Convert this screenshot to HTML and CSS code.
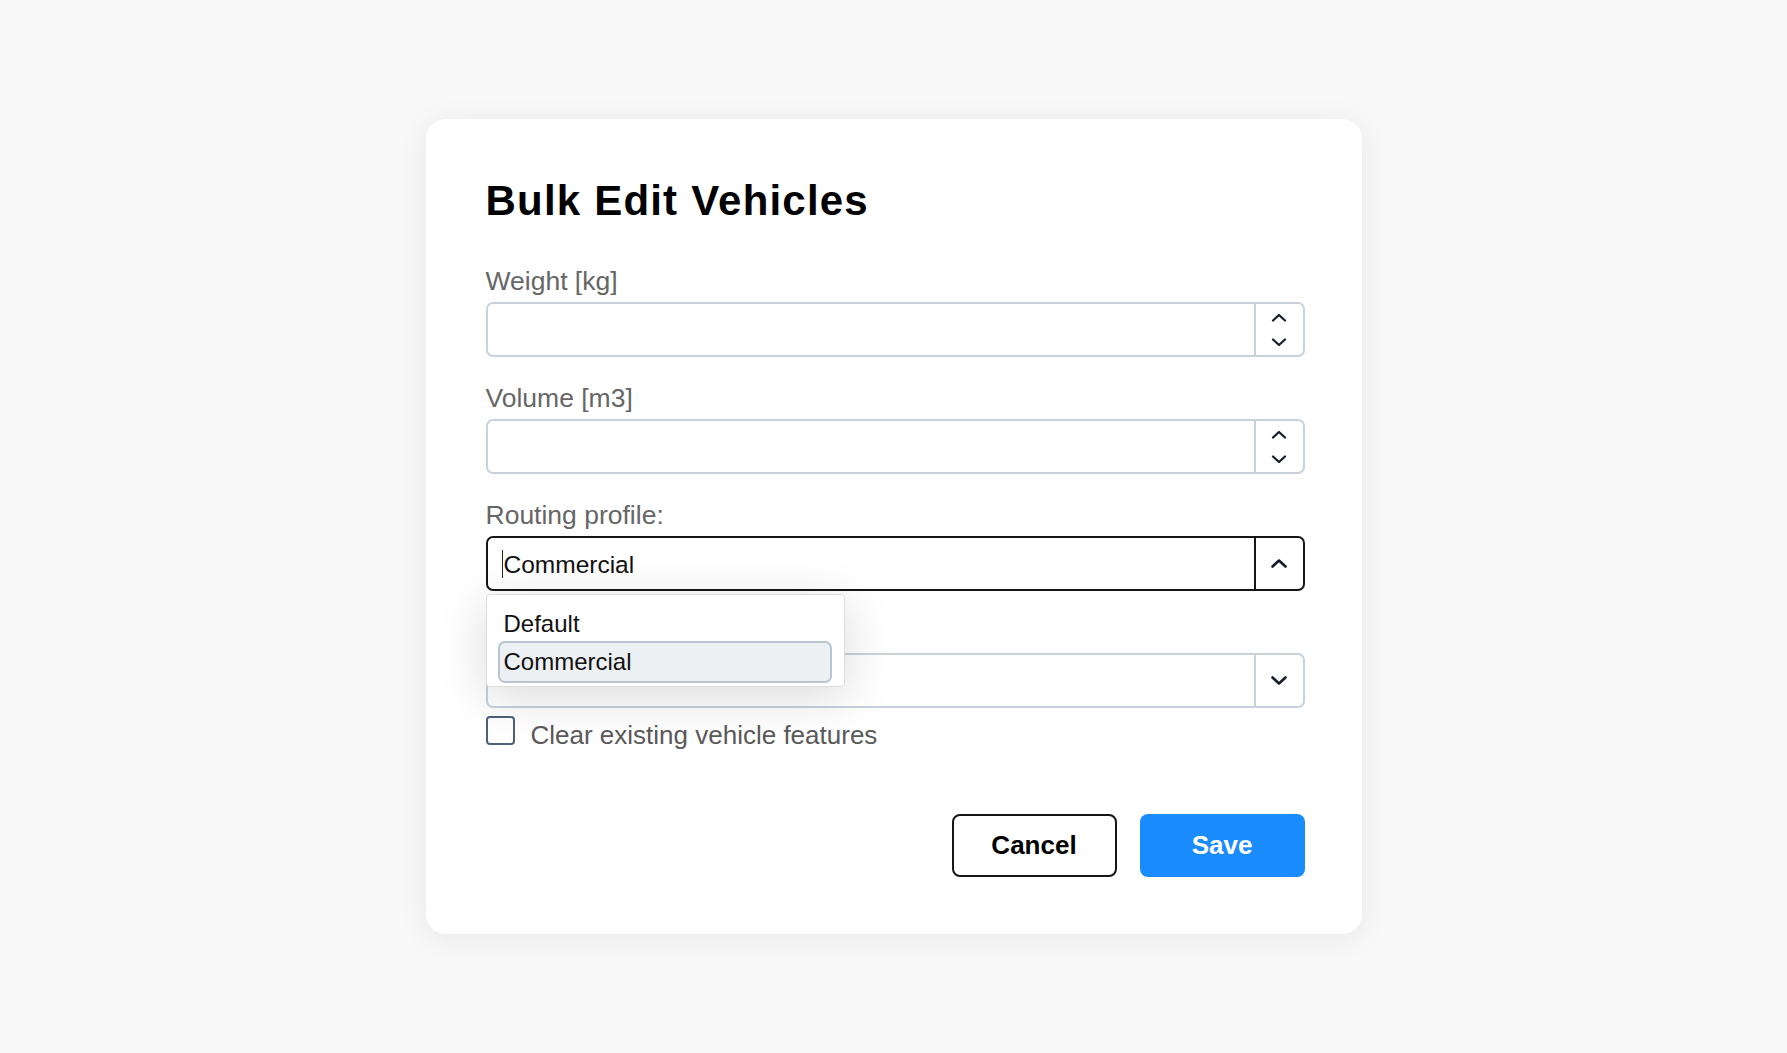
FILE: index.html
```html
<!DOCTYPE html>
<html lang="en">
<head>
  <meta charset="UTF-8" />
  <meta name="viewport" content="width=device-width, initial-scale=1.0"/>
  <title>Bulk Edit Vehicles</title>
  <link rel="stylesheet" href="styles.css">
</head>
<body>
  <div class="dialog">
    <h1>Bulk Edit Vehicles</h1>

    <div class="field">
      <label>Weight [kg]</label>
      <div class="box">
        <div class="value"></div>
        <div class="side spin">
          <svg width="16" height="9" viewBox="0 0 16 9"><path d="M2 7.5 L8 2 L14 7.5" fill="none" stroke="#141c2b" stroke-width="2.2" stroke-linecap="round" stroke-linejoin="round"/></svg>
          <svg width="16" height="9" viewBox="0 0 16 9"><path d="M2 1.5 L8 7 L14 1.5" fill="none" stroke="#141c2b" stroke-width="2.2" stroke-linecap="round" stroke-linejoin="round"/></svg>
        </div>
      </div>
    </div>

    <div class="field">
      <label>Volume [m3]</label>
      <div class="box">
        <div class="value"></div>
        <div class="side spin">
          <svg width="16" height="9" viewBox="0 0 16 9"><path d="M2 7.5 L8 2 L14 7.5" fill="none" stroke="#141c2b" stroke-width="2.2" stroke-linecap="round" stroke-linejoin="round"/></svg>
          <svg width="16" height="9" viewBox="0 0 16 9"><path d="M2 1.5 L8 7 L14 1.5" fill="none" stroke="#141c2b" stroke-width="2.2" stroke-linecap="round" stroke-linejoin="round"/></svg>
        </div>
      </div>
    </div>

    <div class="field routing">
      <label>Routing profile:</label>
      <div class="box active">
        <div class="value"><span class="caret"></span>Commercial</div>
        <div class="side">
          <svg width="18" height="11" viewBox="0 0 18 11"><path d="M2.5 8.5 L9 2.5 L15.5 8.5" fill="none" stroke="#141c2b" stroke-width="2.6" stroke-linecap="round" stroke-linejoin="round"/></svg>
        </div>
      </div>
      <ul class="menu">
        <li>Default</li>
        <li class="selected">Commercial</li>
      </ul>
    </div>

    <div class="field">
      <label class="spacer" aria-label="Vehicle features"></label>
      <div class="box">
        <div class="value"></div>
        <div class="side">
          <svg width="18" height="11" viewBox="0 0 18 11"><path d="M2.5 2.5 L9 8.5 L15.5 2.5" fill="none" stroke="#141c2b" stroke-width="2.6" stroke-linecap="round" stroke-linejoin="round"/></svg>
        </div>
      </div>
    </div>

    <div class="check">
      <span class="checkbox"></span>
      <span class="check-label">Clear existing vehicle features</span>
    </div>

    <div class="actions">
      <button class="btn cancel">Cancel</button>
      <button class="btn save">Save</button>
    </div>
  </div>
</body>
</html>
```

FILE: styles.css
```css
body {
  margin: 0;
  height: 100vh;
  background: #f8f8f8;
  font-family: 'Liberation Sans', Arial, sans-serif;
  display: flex;
  align-items: center;
  justify-content: center;
}

.dialog {
  width: 819px;
  background: white;
  border-radius: 20px;
  padding: 58px 57px 57px 60px;
  box-shadow: 0 4px 30px rgba(0, 0, 0, 0.07);
}

h1 {
  margin: 0 0 40px;
  font-size: 42px;
  line-height: 48px;
  letter-spacing: 1.2px;
  color: #000;
}

.field {
  margin-top: 25px;
  position: relative;
}

.field label {
  display: block;
  font-size: 26.5px;
  line-height: 32px;
  color: #666;
  margin-bottom: 5px;
}

.field label.spacer {
  height: 32px;
}

.box {
  display: flex;
  height: 55px;
  box-sizing: border-box;
  border: 2px solid #c9d1da;
  border-radius: 7px;
  background: white;
}

.box.active {
  border-color: #161616;
}

.value {
  flex: 1;
  display: flex;
  align-items: center;
  padding: 3px 0 0 14px;
  font-size: 24.5px;
  color: #111;
}

.caret {
  display: inline-block;
  width: 1px;
  height: 28px;
  background: #222;
  margin: -3px 1px 0 0;
}

.side {
  width: 47px;
  border-left: 2px solid #c9d1da;
  display: flex;
  align-items: center;
  justify-content: center;
}

.box.active .side {
  border-left-color: #161616;
}

.spin {
  flex-direction: column;
  gap: 16px;
}

.menu {
  position: absolute;
  left: 0;
  top: 95px;
  width: 359px;
  box-sizing: border-box;
  margin: 0;
  padding: 10px 14px 5px 13px;
  list-style: none;
  background: white;
  border: 1px solid #dcdcdc;
  border-radius: 4px;
  box-shadow: 0 10px 50px rgba(0, 0, 0, 0.15);
  z-index: 5;
}

.menu li {
  font-size: 24px;
  line-height: 38px;
  padding-left: 4px;
  color: #111;
  border-radius: 5px;
}

.menu li.selected {
  background: #edf0f3;
  outline: 2px solid #b8c4d0;
}

.check {
  display: flex;
  align-items: flex-start;
  gap: 16px;
  margin-top: 8px;
}

.checkbox {
  width: 29px;
  height: 29px;
  box-sizing: border-box;
  border: 2px solid #4d6177;
  border-radius: 4px;
}

.check-label {
  font-size: 26px;
  line-height: 30px;
  padding-top: 4px;
  color: #5a5a5a;
}

.actions {
  display: flex;
  justify-content: flex-end;
  gap: 23px;
  margin-top: 64px;
}

.btn {
  width: 165px;
  height: 63px;
  border-radius: 8px;
  font-family: 'Liberation Sans', Arial, sans-serif;
  font-size: 26px;
  font-weight: bold;
  cursor: pointer;
}

.cancel {
  background: white;
  color: #000;
  border: 2px solid #161616;
}

.save {
  background: #1a8cff;
  color: white;
  border: none;
}
```
